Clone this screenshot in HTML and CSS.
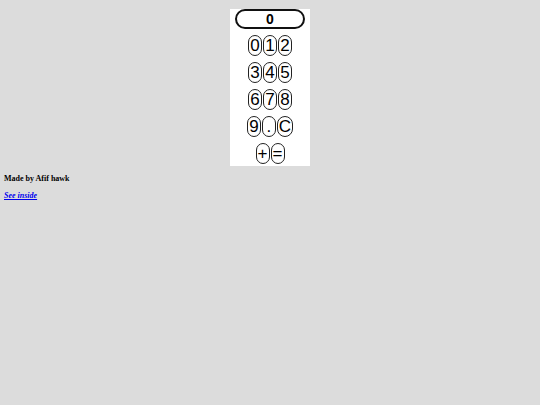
FILE: index.html
```html
<!DOCTYPE html>
<html lang="en">
<head>
  <meta charset="UTF-8" />
  <title>Calculator</title>
  <link rel="stylesheet" href="styles.css">
</head>
<body>

  <div class="calc">
    <div class="display" id="display">0</div>
    <div class="row">
      <button>0</button>
      <button>1</button>
      <button>2</button>
    </div>
    <div class="row">
      <button>3</button>
      <button>4</button>
      <button>5</button>
    </div>
    <div class="row">
      <button>6</button>
      <button>7</button>
      <button>8</button>
    </div>
    <div class="row">
      <button>9</button>
      <button>.</button>
      <button>C</button>
    </div>
    <div class="row">
      <button>+</button>
      <button>=</button>
    </div>
  </div>

  <div class="credits">
    <p class="author">Made by Afif hawk</p>
    <p class="link"><a href="#" class="inside">See inside</a></p>
  </div>

</body>
</html>
```

FILE: styles.css
```css
* {
  margin: 0;
  padding: 0;
  box-sizing: border-box;
}

body {
  background: #dcdcdc;
  font-family: 'Liberation Serif', serif;
}

.calc {
  width: 80px;
  height: 157px;
  margin: 9px auto 0;
  background: #fff;
}

.display {
  width: 70px;
  height: 20px;
  margin: 0 auto;
  border: 2px solid #111;
  border-radius: 10px;
  font: bold 14px 'Liberation Sans', sans-serif;
  line-height: 16px;
  text-align: center;
  color: #000;
}

.row {
  display: flex;
  justify-content: center;
  gap: 1px;
  margin-top: 6px;
}

.row:first-of-type {
  margin-top: 8px;
}

.row button {
  height: 21px;
  min-width: 14px;
  padding: 0 1px;
  border: 1px solid #222;
  border-radius: 8px;
  background: #fff;
  color: #000;
  font: 17px 'Liberation Sans', sans-serif;
  line-height: 19px;
  cursor: pointer;
}

.credits {
  padding: 0 4px;
  margin-top: 8px;
  font-size: 8px;
  line-height: 10px;
}

.author {
  font-weight: bold;
  color: #000;
}

.link {
  margin-top: 7px;
}

.inside {
  font-weight: bold;
  font-style: italic;
  color: #0000ee;
}
```
